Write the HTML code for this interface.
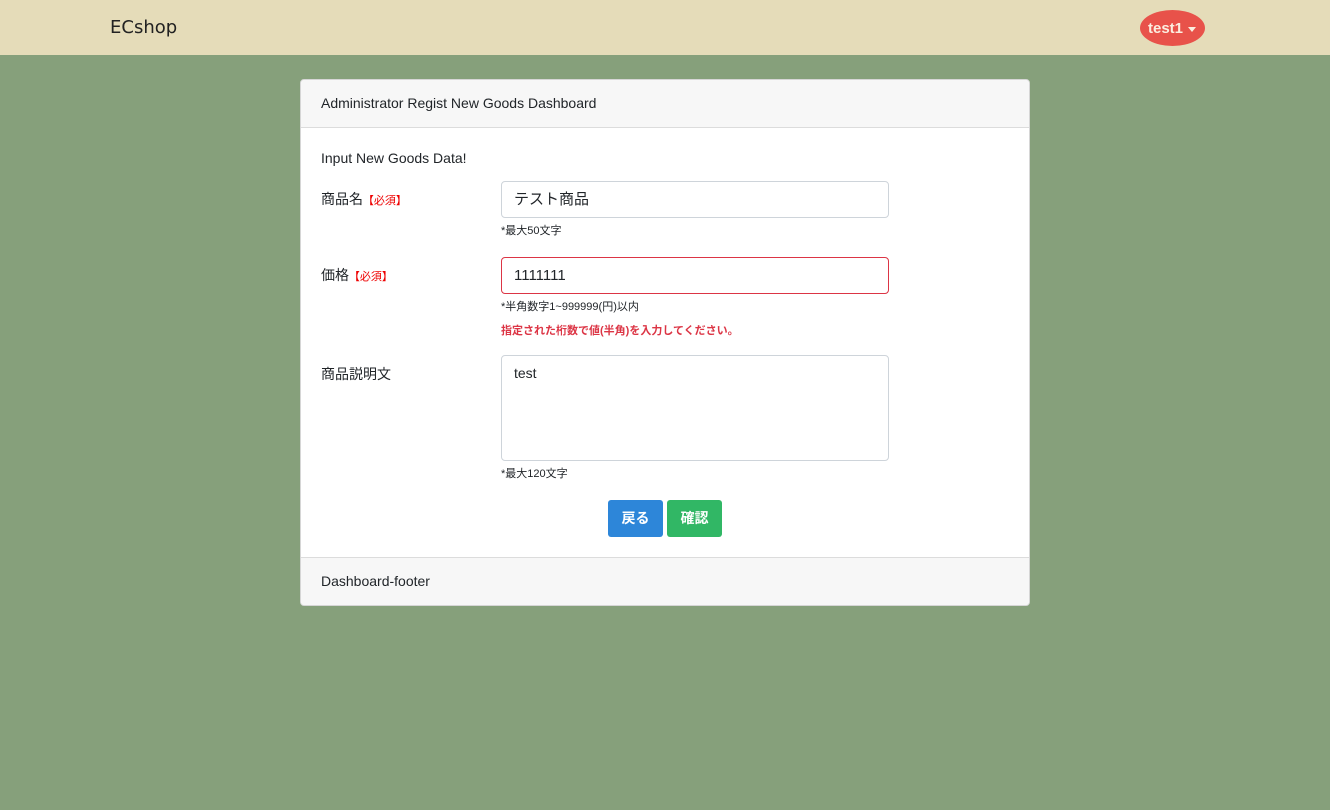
<!DOCTYPE html>
<html><head><meta charset="utf-8"><style>
*{box-sizing:border-box;margin:0;padding:0}
body{width:1330px;height:810px;background:#86a07b;font-family:"Liberation Sans","Noto Sans CJK JP",sans-serif;color:#212529;position:relative;overflow:hidden}
.nav{position:absolute;left:0;top:0;width:1330px;height:55px;background:#e5dcb9}
.brand{position:absolute;left:110px;top:17px;font-size:18px;font-family:"Comic Sans MS","DejaVu Sans",sans-serif;color:#222}
.user{position:absolute;left:1140px;top:10px;width:65px;height:36px;border-radius:50%;background:#e8524a;color:#fbeee0;font-size:15px;font-weight:bold;line-height:36px;padding-left:8px;padding-top:1px}
.user:after{content:"";position:absolute;left:48px;top:17px;border:4px solid transparent;border-top:5px solid #fbeee0;border-bottom:0}
.card{position:absolute;left:300px;top:79px;width:730px;height:527px;background:#fff;border:1px solid #d6d6d6;border-radius:4px;overflow:hidden}
.hd{height:48px;background:#f7f7f7;border-bottom:1px solid #dcdcdc;padding:15px 20px;font-size:14px}
.ft{position:absolute;left:0;bottom:0;width:100%;height:48px;background:#f7f7f7;border-top:1px solid #dcdcdc;padding:15px 20px;font-size:14px}
.a{position:absolute;font-size:14px}
.req{color:#e00;font-size:11px;margin-left:-4px}
.in{position:absolute;left:200px;width:388px;border:1px solid #ced4da;border-radius:4px;font-size:15px;padding:0 12px;line-height:35px}
.s{position:absolute;left:200px;font-size:11px}
.btn{position:absolute;top:420px;height:37px;width:55px;border-radius:3px;color:#fff;font-weight:bold;font-size:14px;text-align:center;line-height:37px}
</style></head><body>
<div class="nav"><div class="brand">ECshop</div><div class="user">test1</div></div>
<div class="card">
<div class="hd">Administrator Regist New Goods Dashboard</div>
<div class="a" style="left:20px;top:70px">Input New Goods Data!</div>
<div class="a" style="left:20px;top:109px">商品名 <span class="req">【必須】</span></div>
<div class="in" style="top:101px;height:37px">テスト商品</div>
<div class="s" style="top:142px">*最大50文字</div>
<div class="a" style="left:20px;top:185px">価格 <span class="req">【必須】</span></div>
<div class="in" style="top:177px;height:37px;border-color:#dc3545">1111111</div>
<div class="s" style="top:218px">*半角数字1~999999(円)以内</div>
<div class="s" style="top:242px;color:#dc3545;font-weight:bold">指定された桁数で値(半角)を入力してください。</div>
<div class="a" style="left:20px;top:284px">商品説明文</div>
<div class="in" style="top:275px;height:106px;line-height:1;padding-top:10px;font-size:14px">test</div>
<div class="s" style="top:385px">*最大120文字</div>
<div class="btn" style="left:307px;background:#2d86d9">戻る</div>
<div class="btn" style="left:366px;background:#31b765">確認</div>
<div class="ft">Dashboard-footer</div>
</div>
</body></html>
